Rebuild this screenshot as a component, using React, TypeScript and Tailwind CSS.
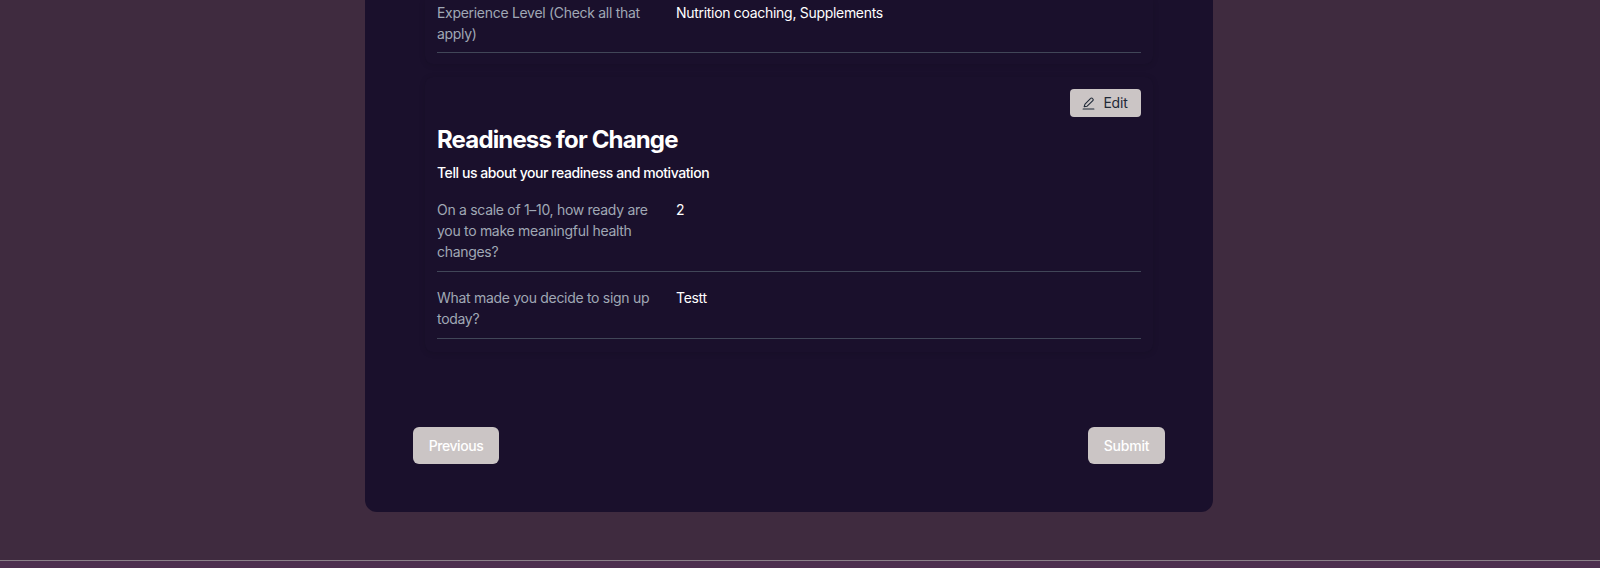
const font = "font-['Inter','Noto_Sans',sans-serif]";

function Row(props: { label: string; value: string; className?: string }) {
  return (
    <div className={`flex border-b border-[#414658] text-[14px] leading-[21px] tracking-[-0.3px] ${props.className ?? ""}`}>
      <div className="w-[239px] shrink-0 pr-6 text-[#a0a8b5]">{props.label}</div>
      <div className="text-white">{props.value}</div>
    </div>
  );
}

function EditIcon() {
  return (
    <svg width="13" height="13" viewBox="0 0 24 24" fill="none" stroke="currentColor" strokeWidth="2" strokeLinecap="round" strokeLinejoin="round" className="mt-[1px] ml-[-1px]">
      <path d="M2 22h20" />
      <path d="M4 18l1.5-5L16 2.5a2.2 2.2 0 0 1 3.2 0l.8.8a2.2 2.2 0 0 1 0 3.2L9.5 17 4 18z" />
    </svg>
  );
}

export default function App() {
  return (
    <div className={`flex h-[568px] w-[1600px] flex-col overflow-hidden bg-[#3f2b3f] ${font}`}>
      <div className="flex h-[560px] shrink-0 justify-center">
        <div className="ml-[-22px] flex h-[512px] w-[848px] flex-col rounded-b-xl bg-[#1a102c] px-[48px]">
          <div className="mx-[12px] rounded-b-lg bg-[#1a102c] px-3 pt-[2px] pb-[11px] shadow-[0_1px_6px_rgba(0,0,0,0.12)]">
            <Row className="pb-2" label="Experience Level (Check all that apply)" value="Nutrition coaching, Supplements" />
          </div>

          <div className="mx-[12px] mt-[13px] h-[275px] rounded-lg bg-[#1a102c] px-3 pt-[12px] shadow-[0_1px_6px_rgba(0,0,0,0.12)]">
            <div className="flex justify-end">
              <button className="flex h-[28px] w-[71px] items-center justify-center gap-2 rounded bg-[#cbc5c5] text-[14px] leading-[20px] tracking-[-0.2px] text-[#1f2937]">
                <EditIcon />
                <span className="mt-[-1px]">Edit</span>
              </button>
            </div>
            <h2 className="mt-[7px] text-[24px] leading-[32px] font-bold tracking-[-0.85px] text-white">Readiness for Change</h2>
            <p className="mt-[7px] text-[14px] leading-[20px] font-medium tracking-[-0.43px] text-white">Tell us about your readiness and motivation</p>
            <Row
              className="mt-[16px] pb-[9px]"
              label="On a scale of 1–10, how ready are you to make meaningful health changes?"
              value="2"
            />
            <Row className="mt-[15px] pb-[9px]" label="What made you decide to sign up today?" value="Testt" />
          </div>

          <div className="mt-[75px] flex justify-between">
            <button className="h-[37px] w-[86px] rounded-md bg-[#cbc5c5] text-[14px] font-medium tracking-[-0.45px] text-white">Previous</button>
            <button className="h-[37px] w-[77px] rounded-md bg-[#cbc5c5] text-[14px] font-medium tracking-[-0.2px] text-white">Submit</button>
          </div>
        </div>
      </div>
      <div className="h-[8px] shrink-0 border-t border-[#8a8088] bg-[#4d2f4f]" />
    </div>
  );
}
